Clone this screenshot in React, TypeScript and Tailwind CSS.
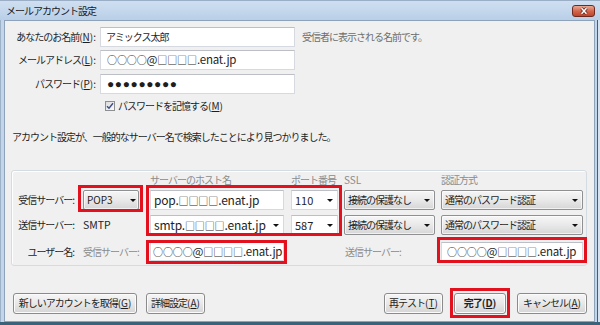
import React from "react";

function Arrow() {
  return (
    <svg width="6" height="3" viewBox="0 0 6 3" className="shrink-0">
      <path d="M0 0H6L3 3Z" fill="#111" />
    </svg>
  );
}

function M({ k }: { k: string }) {
  return (
    <span className="tracking-normal">
      (<span className="underline underline-offset-[1px]">{k}</span>)
    </span>
  );
}

function Combo({ className, children }: { className: string; children: React.ReactNode }) {
  return (
    <div
      className={`h-[20px] rounded-[2px] border border-[#8f9091] bg-linear-to-b from-[#f6f6f6] via-[#e9e9e9] to-[#d6d6d6] shadow-[inset_0_0_0_1px_rgba(255,255,255,0.65)] flex items-center justify-between pl-[3px] ${className}`}
    >
      <span>{children}</span>
      <Arrow />
    </div>
  );
}

function Field({
  className,
  children,
  arrow,
}: {
  className: string;
  children?: React.ReactNode;
  arrow?: boolean;
}) {
  return (
    <div
      className={`h-full bg-white border border-[#d6dae0] border-t-[#bcc0c6] flex items-center justify-between pr-[4px] ${className}`}
    >
      <span className="whitespace-nowrap">{children}</span>
      {arrow ? <Arrow /> : null}
    </div>
  );
}

function Btn({ className, children }: { className: string; children: React.ReactNode }) {
  return (
    <div
      className={`h-[21px] rounded-[3px] border border-[#8b8b8b] bg-linear-to-b from-[#f6f6f6] via-[#e8e8e8] to-[#d5d5d5] shadow-[inset_0_0_0_1px_#fbfbfb] flex items-center justify-center whitespace-nowrap ${className}`}
    >
      {children}
    </div>
  );
}

const Sq = ({ t }: { t: string }) => <span className="text-[10px] tracking-[-0.1px]">{t}</span>;

const Mail = () => (
  <span className="text-[11.5px] tracking-[-0.2px]">
    <Sq t="○○○○" />@<Sq t="□□□□" />.enat.jp
  </span>
);

export default function App() {
  return (
    <div className="w-[600px] h-[325px] flex flex-col overflow-hidden bg-[#c2d5eb] font-['Noto_Sans_CJK_JP',sans-serif] text-[10px] leading-none tracking-[-1px] text-[#1e1e1e]">
      {/* title bar */}
      <div className="h-[20px] shrink-0 flex items-center justify-between pl-[6px] pr-[5px] bg-linear-to-b from-[#cfdff0] to-[#b9cfe8] border-t border-[#9aafc5]">
        <span className="text-[#1a1a1a]">メールアカウント設定</span>
        <div className="w-[23px] h-[12px] rounded-[3px] border border-[#6e2a21] bg-linear-to-b from-[#e9a995] via-[#d3664d] to-[#c0432c] flex items-center justify-center">
          <svg width="10" height="8" viewBox="0 0 10 8">
            <path d="M2.5 1.2L7.5 6.8M7.5 1.2L2.5 6.8" stroke="#5a1d15" strokeWidth="3" />
            <path d="M2.5 1.2L7.5 6.8M7.5 1.2L2.5 6.8" stroke="#ffffff" strokeWidth="1.6" />
          </svg>
        </div>
      </div>

      <div className="flex flex-1 min-h-0">
        <div className="w-[4px] border-l border-[#9db1c7] bg-[#c2d5eb]" />
        <div className="flex-1 flex flex-col bg-[#f0f0f0] border border-[#8ea3ba]">
          {/* top fields */}
          <div className="flex flex-col pt-[6px]">
            <div className="flex items-center h-[20px]">
              <div className="w-[90px] text-right">
                あなたのお名前<M k="N" />:
              </div>
              <Field className="ml-[5px] w-[195px] pl-[5px]">アミックス太郎</Field>
              <span className="ml-[7px] text-[#6d6d6d]">受信者に表示される名前です。</span>
            </div>
            <div className="flex items-center h-[20px] mt-[3px]">
              <div className="w-[90px] text-right">
                メールアドレス<M k="L" />:
              </div>
              <Field className="ml-[5px] w-[195px] pl-[6px]">
                <Mail />
              </Field>
            </div>
            <div className="flex items-center h-[20px] mt-[4px]">
              <div className="w-[90px] text-right">
                パスワード<M k="P" />:
              </div>
              <Field className="ml-[5px] w-[195px] pl-[6px]">
                <span className="font-['Liberation_Sans',sans-serif] text-[12px] tracking-[0.6px]">
                  ●●●●●●●●●
                </span>
              </Field>
            </div>
          </div>

          {/* remember password */}
          <div className="flex items-center mt-[6px] h-[11px] pl-[100px]">
            <div className="w-[10px] h-[10px] border border-[#8e8f8f] bg-linear-to-br from-[#dcdcdc] to-[#fbfbfb] flex items-center justify-center">
              <svg width="8" height="8" viewBox="0 0 8 8">
                <path d="M1 4.2L3 6.3L7 1.3" stroke="#3a4d8a" strokeWidth="1.4" fill="none" />
              </svg>
            </div>
            <span className="ml-[3px]">
              パスワードを記憶する<M k="M" />
            </span>
          </div>

          {/* message */}
          <div className="mt-[19px] h-[14px] flex items-center pl-[7px]">
            アカウント設定が、一般的なサーバー名で検索したことにより見つかりました。
          </div>

          {/* group box */}
          <div className="relative mt-[26px] ml-[6px] mr-[7px] h-[96px] border border-[#d3dce3] rounded-[3px] shadow-[inset_1px_1px_0_#ffffff] flex flex-col pt-[1px]">
            <div className="flex h-[15px] items-center text-[#8b8b8b]">
              <div className="w-[138px]" />
              <div className="w-[141px]">サーバーのホスト名</div>
              <div className="w-[53px]">ポート番号</div>
              <div className="w-[97px] tracking-normal">SSL</div>
              <div>認証方式</div>
            </div>

            <div className="flex h-[20px] mt-[3px] items-center">
              <div className="w-[71px] text-right pr-[9px]">受信サーバー:</div>
              <div className="w-[67px] h-full">
                <Combo className="w-[56px] pr-[2px] tracking-normal">POP3</Combo>
              </div>
              <div className="w-[141px] h-full">
                <Field className="w-[134px] pl-[3px] text-[12px] tracking-[-0.2px]">
                  pop.<Sq t="□□□□" />.enat.jp
                </Field>
              </div>
              <div className="w-[53px] h-full">
                <Field className="w-[47px] pl-[3px] text-[11px] tracking-normal" arrow>
                  110
                </Field>
              </div>
              <div className="w-[97px] h-full">
                <Combo className="w-[91px] pr-[4px]">接続の保護なし</Combo>
              </div>
              <Combo className="w-[142px] pr-[4px]">通常のパスワード認証</Combo>
            </div>

            <div className="flex h-[20px] mt-[5px] items-center">
              <div className="w-[71px] text-right pr-[9px]">送信サーバー:</div>
              <div className="w-[67px] tracking-normal text-[10.5px]">SMTP</div>
              <div className="w-[141px] h-full">
                <Field className="w-[134px] pl-[3px] text-[12px] tracking-[-0.2px]" arrow>
                  smtp.<Sq t="□□□□" />.enat.jp
                </Field>
              </div>
              <div className="w-[53px] h-full">
                <Field className="w-[47px] pl-[3px] text-[11px] tracking-normal" arrow>
                  587
                </Field>
              </div>
              <div className="w-[97px] h-full">
                <Combo className="w-[91px] pr-[4px]">接続の保護なし</Combo>
              </div>
              <Combo className="w-[142px] pr-[4px]">通常のパスワード認証</Combo>
            </div>

            <div className="flex h-[19px] mt-[7px] items-center">
              <div className="w-[71px] text-right pr-[9px]">ユーザー名:</div>
              <div className="w-[67px] text-[#8b8b8b]">受信サーバー:</div>
              <div className="w-[141px] h-full">
                <Field className="w-[134px] pl-[2px]">
                  <Mail />
                </Field>
              </div>
              <div className="w-[53px]" />
              <div className="w-[97px] pl-[1px] text-[#8b8b8b]">送信サーバー:</div>
              <Field className="w-[142px] pl-[5px]">
                <Mail />
              </Field>
            </div>

            {/* red annotation boxes */}
            <div className="absolute left-[66px] top-[14px] w-[65px] h-[27px] border-[3px] border-[#e3101d] pointer-events-none" />
            <div className="absolute left-[134px] top-[14px] w-[196px] h-[51px] border-[3px] border-[#e3101d] pointer-events-none" />
            <div className="absolute left-[134px] top-[69px] w-[141px] h-[24px] border-[3px] border-[#e3101d] pointer-events-none" />
            <div className="absolute left-[425px] top-[66px] w-[150px] h-[26px] border-[3px] border-[#e3101d] pointer-events-none" />
          </div>

          {/* bottom buttons */}
          <div className="mt-[22px] h-[30px] flex items-center justify-between pl-[8px] pr-[7px]">
            <div className="flex gap-[9px]">
              <Btn className="w-[124px]">
                新しいアカウントを取得<M k="G" />
              </Btn>
              <Btn className="w-[59px]">
                詳細設定<M k="A" />
              </Btn>
            </div>
            <div className="flex items-center gap-[7px]">
              <Btn className="w-[59px]">
                再テスト<M k="T" />
              </Btn>
              <div className="w-[60px] h-[30px] border-[3px] border-[#e3101d] flex items-center justify-center">
                <Btn className="w-[52px] font-bold">
                  完了<M k="D" />
                </Btn>
              </div>
              <Btn className="w-[70px]">
                キャンセル<M k="A" />
              </Btn>
            </div>
          </div>
        </div>
        <div className="w-[5px] flex">
          <div className="w-[2px] bg-[#c2d5eb]" />
          <div className="w-[1px] bg-[#3b6278]" />
          <div className="flex-1 bg-[#d5e2ef]" />
        </div>
      </div>
      <div className="h-[3px] shrink-0 bg-[#3b6278]" />
    </div>
  );
}
